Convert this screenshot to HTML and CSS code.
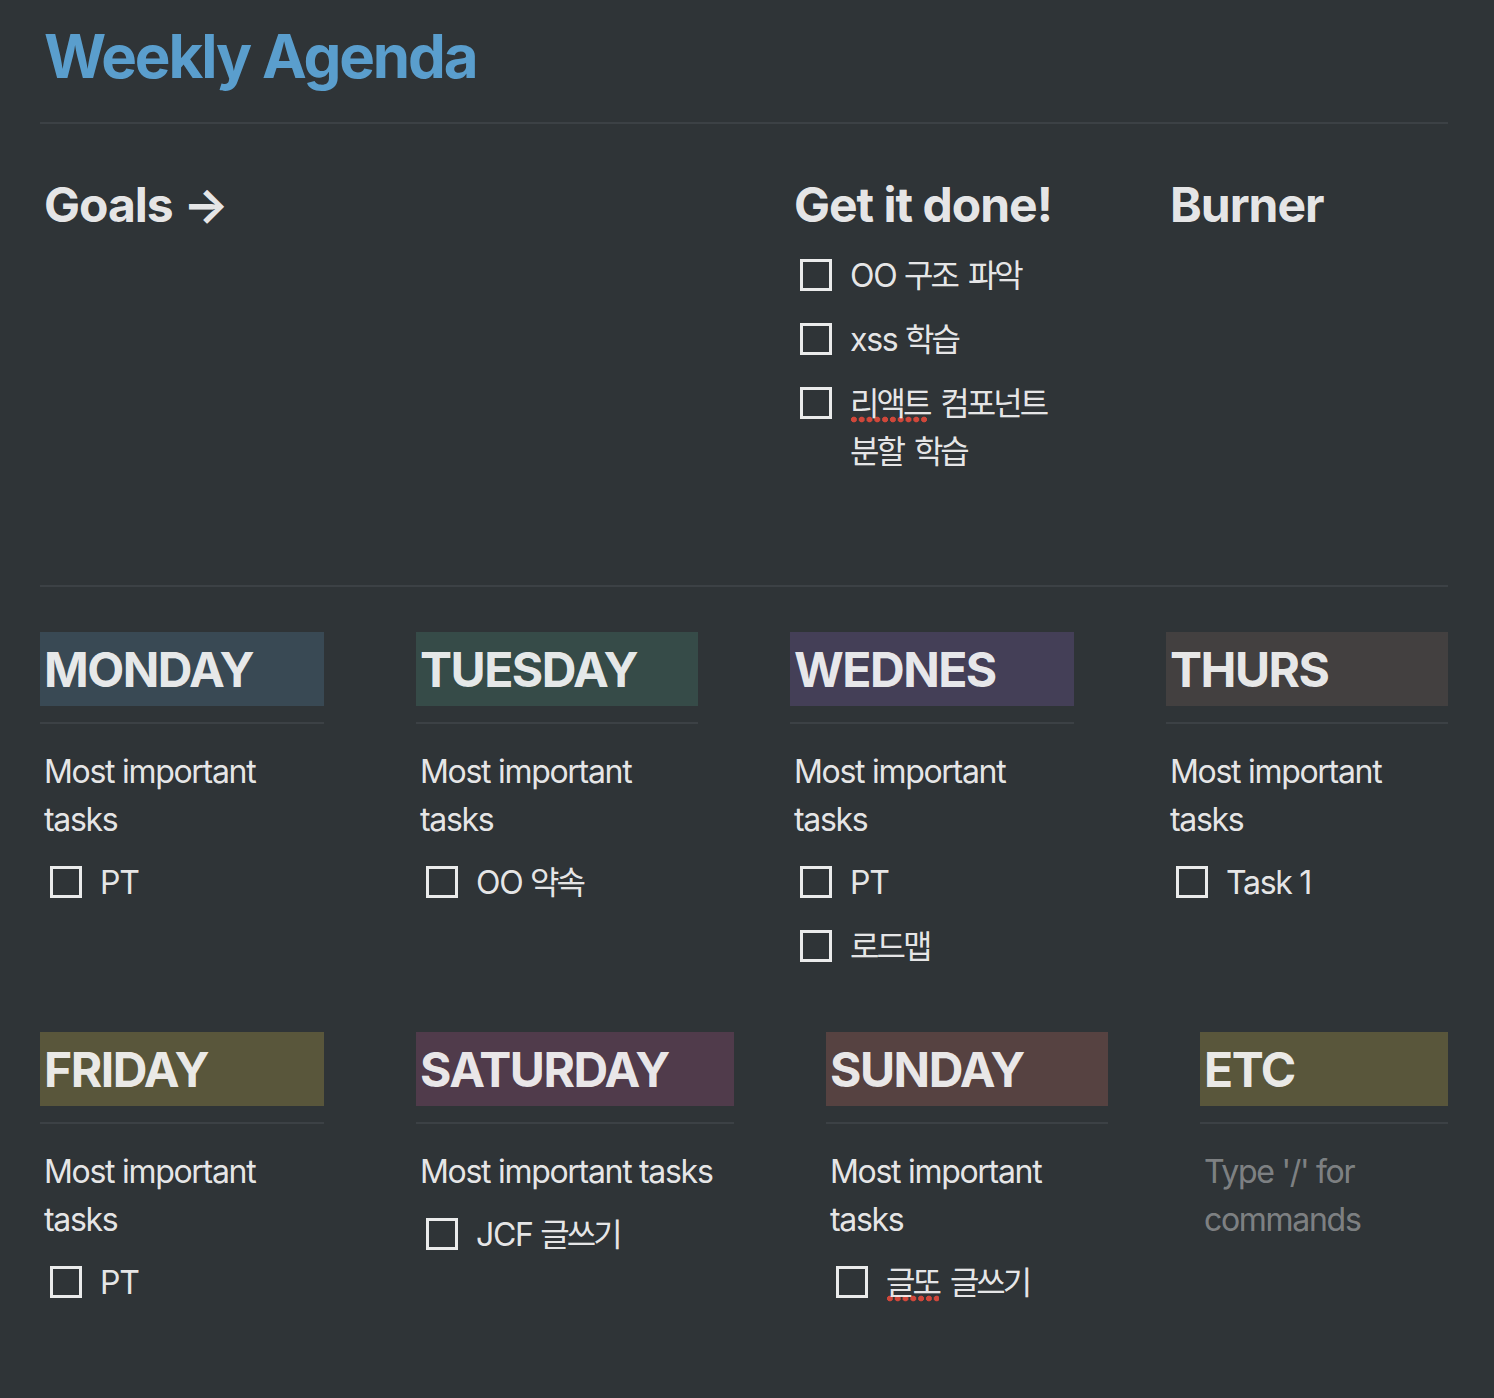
FILE: index.html
```html
<!DOCTYPE html>
<html lang="ko">
<head>
<meta charset="utf-8">
<title>Weekly Agenda</title>
<link rel="stylesheet" href="styles.css">
</head>
<body>
<div class="page">
  <h1 class="title">Weekly Agenda</h1>
  <div class="divider divider-top"></div>

  <div class="row row-top">
    <div class="col col-goals">
      <h2 class="h2">Goals →</h2>
    </div>
    <div class="col col-284">
      <h2 class="h2">Get it done!</h2>
      <div class="todo"><span class="box"></span><span class="todo-text">OO <span class="ko">구조 파악</span></span></div>
      <div class="todo"><span class="box"></span><span class="todo-text">xss <span class="ko">학습</span></span></div>
      <div class="todo"><span class="box"></span><span class="todo-text"><span class="ko"><span class="spell">리액트</span> 컴포넌트 분할 학습</span></span></div>
    </div>
    <div class="col col-282">
      <h2 class="h2">Burner</h2>
    </div>
  </div>

  <div class="divider divider-mid"></div>

  <div class="row row-days1">
    <div class="col col-284">
      <h2 class="h2 day bg-blue">MONDAY</h2>
      <div class="divider divider-day"></div>
      <div class="text">Most important tasks</div>
      <div class="todo"><span class="box"></span><span class="todo-text">PT</span></div>
    </div>
    <div class="col col-282">
      <h2 class="h2 day bg-teal">TUESDAY</h2>
      <div class="divider divider-day"></div>
      <div class="text">Most important tasks</div>
      <div class="todo"><span class="box"></span><span class="todo-text">OO <span class="ko">약속</span></span></div>
    </div>
    <div class="col col-284">
      <h2 class="h2 day bg-purple">WEDNES</h2>
      <div class="divider divider-day"></div>
      <div class="text">Most important tasks</div>
      <div class="todo"><span class="box"></span><span class="todo-text">PT</span></div>
      <div class="todo"><span class="box"></span><span class="todo-text"><span class="ko">로드맵</span></span></div>
    </div>
    <div class="col col-282">
      <h2 class="h2 day bg-brown">THURS</h2>
      <div class="divider divider-day"></div>
      <div class="text">Most important tasks</div>
      <div class="todo"><span class="box"></span><span class="todo-text">Task 1</span></div>
    </div>
  </div>

  <div class="row row-days2">
    <div class="col col-284">
      <h2 class="h2 day bg-yellow">FRIDAY</h2>
      <div class="divider divider-day"></div>
      <div class="text">Most important tasks</div>
      <div class="todo"><span class="box"></span><span class="todo-text">PT</span></div>
    </div>
    <div class="col col-318">
      <h2 class="h2 day bg-pink">SATURDAY</h2>
      <div class="divider divider-day"></div>
      <div class="text">Most important tasks</div>
      <div class="todo"><span class="box"></span><span class="todo-text">JCF <span class="ko">글쓰기</span></span></div>
    </div>
    <div class="col col-282">
      <h2 class="h2 day bg-red">SUNDAY</h2>
      <div class="divider divider-day"></div>
      <div class="text">Most important tasks</div>
      <div class="todo"><span class="box"></span><span class="todo-text"><span class="ko"><span class="spell">글또</span> 글쓰기</span></span></div>
    </div>
    <div class="col col-248">
      <h2 class="h2 day bg-yellow">ETC</h2>
      <div class="divider divider-day"></div>
      <div class="text placeholder">Type '/' for commands</div>
    </div>
  </div>
</div>
</body>
</html>
```

FILE: styles.css
```css
html, body {
  margin: 0;
  padding: 0;
  background: #2f3437;
}

body {
  color: rgba(255, 255, 255, 0.9);
  font-family: "Inter", "Noto Sans CJK KR", sans-serif;
  font-size: 32px;
  line-height: 48px;
  min-height: 1398px;
  word-break: keep-all;
}

.page {
  width: 1408px;
  padding: 11px 46px 0 40px;
}

.title {
  margin: 0;
  padding: 6px 4px;
  font-size: 60px;
  line-height: 78px;
  font-weight: 700;
  letter-spacing: -2.1px;
  color: #5a9ecd;
}

.divider {
  height: 0;
  border-top: 2px solid #3c4145;
}

.divider-top {
  margin-top: 21px;
}

.divider-mid {
  margin-top: 104px;
}

.divider-day {
  margin: 12px 0 12px;
}

.row {
  display: flex;
  gap: 92px;
}

.row-top {
  margin-top: 43px;
}

.row-days1 {
  margin-top: 45px;
}

.row-days2 {
  margin-top: 56px;
}

.col {
  display: flex;
  flex-direction: column;
  gap: 4px;
  min-width: 0;
}

.col-goals { width: 658px; }
.col-284 { width: 284px; }
.col-282 { width: 282px; }
.col-318 { width: 318px; }
.col-248 { width: 248px; }

.h2 {
  margin: 0;
  padding: 7px 4px 5px;
  font-size: 48px;
  line-height: 62px;
  font-weight: 700;
  letter-spacing: -1px;
}

.day {
  letter-spacing: -1.5px;
}

.bg-blue { background: rgb(57, 73, 84); }
.bg-teal { background: rgb(54, 75, 72); }
.bg-purple { background: rgb(68, 63, 87); }
.bg-brown { background: rgb(67, 64, 64); }
.bg-yellow { background: rgb(89, 86, 59); }
.bg-pink { background: rgb(80, 59, 75); }
.bg-red { background: rgb(86, 66, 65); }

.text {
  padding: 8px 4px 4px;
  letter-spacing: -1.3px;
}

.placeholder {
  color: rgba(255, 255, 255, 0.4);
}

.todo {
  display: flex;
  align-items: flex-start;
  padding: 7px 4px 5px;
  letter-spacing: -1.3px;
}

.box {
  flex: none;
  box-sizing: border-box;
  width: 32px;
  height: 32px;
  margin: 7px 18px 0 6px;
  border: 3px solid rgba(255, 255, 255, 0.9);
}

.todo-text {
  min-width: 0;
}

.ko {
  letter-spacing: -3px;
  word-spacing: 5px;
}

.spell {
  background-image: radial-gradient(circle, #d0473a 0, #d0473a 2.6px, transparent 3.2px);
  background-size: 7.8px 7px;
  background-repeat: repeat-x;
  background-position: 0 100%;
}
```
